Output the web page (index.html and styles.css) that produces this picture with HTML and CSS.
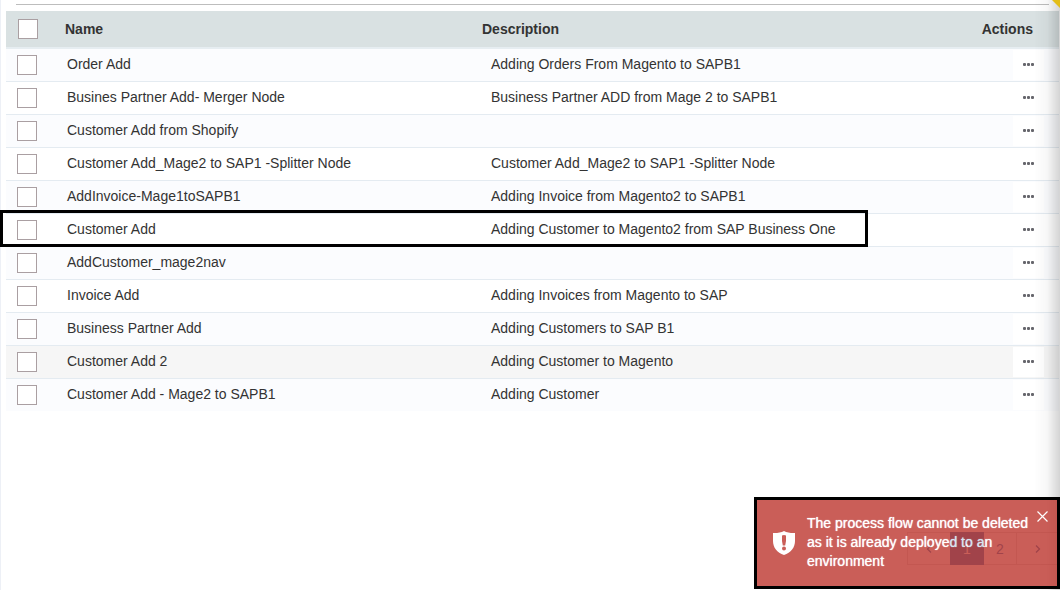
FILE: index.html
```html
<!DOCTYPE html>
<html lang="en">
<head>
<meta charset="utf-8">
<title>Process Flows</title>
<link rel="stylesheet" href="styles.css">
</head>
<body>
<main class="page">
  <hr class="divider">
  <table class="flows">
    <colgroup><col class="col-check"><col class="col-name"><col class="col-desc"><col class="col-actions"></colgroup>
    <thead>
      <tr><th class="check"><input type="checkbox" aria-label="Select all"></th><th>Name</th><th>Description</th><th class="actions">Actions</th></tr>
    </thead>
    <tbody>
      <tr><td class="check"><input type="checkbox" aria-label="Select Order Add"></td><td>Order Add</td><td class="desc">Adding Orders From Magento to SAPB1</td><td class="actions"><button class="more" type="button" aria-label="More actions"><i></i><i></i><i></i></button></td></tr>
      <tr><td class="check"><input type="checkbox" aria-label="Select Busines Partner Add- Merger Node"></td><td>Busines Partner Add- Merger Node</td><td class="desc">Business Partner ADD from Mage 2 to SAPB1</td><td class="actions"><button class="more" type="button" aria-label="More actions"><i></i><i></i><i></i></button></td></tr>
      <tr><td class="check"><input type="checkbox" aria-label="Select Customer Add from Shopify"></td><td>Customer Add from Shopify</td><td class="desc"></td><td class="actions"><button class="more" type="button" aria-label="More actions"><i></i><i></i><i></i></button></td></tr>
      <tr><td class="check"><input type="checkbox" aria-label="Select Customer Add_Mage2 to SAP1 -Splitter Node"></td><td>Customer Add_Mage2 to SAP1 -Splitter Node</td><td class="desc">Customer Add_Mage2 to SAP1 -Splitter Node</td><td class="actions"><button class="more" type="button" aria-label="More actions"><i></i><i></i><i></i></button></td></tr>
      <tr><td class="check"><input type="checkbox" aria-label="Select AddInvoice-Mage1toSAPB1"></td><td>AddInvoice-Mage1toSAPB1</td><td class="desc">Adding Invoice from Magento2 to SAPB1</td><td class="actions"><button class="more" type="button" aria-label="More actions"><i></i><i></i><i></i></button></td></tr>
      <tr class="marked"><td class="check"><input type="checkbox" aria-label="Select Customer Add"></td><td>Customer Add</td><td class="desc">Adding Customer to Magento2 from SAP Business One</td><td class="actions"><button class="more" type="button" aria-label="More actions"><i></i><i></i><i></i></button></td></tr>
      <tr><td class="check"><input type="checkbox" aria-label="Select AddCustomer_mage2nav"></td><td>AddCustomer_mage2nav</td><td class="desc"></td><td class="actions"><button class="more" type="button" aria-label="More actions"><i></i><i></i><i></i></button></td></tr>
      <tr><td class="check"><input type="checkbox" aria-label="Select Invoice Add"></td><td>Invoice Add</td><td class="desc">Adding Invoices from Magento to SAP</td><td class="actions"><button class="more" type="button" aria-label="More actions"><i></i><i></i><i></i></button></td></tr>
      <tr><td class="check"><input type="checkbox" aria-label="Select Business Partner Add"></td><td>Business Partner Add</td><td class="desc">Adding Customers to SAP B1</td><td class="actions"><button class="more" type="button" aria-label="More actions"><i></i><i></i><i></i></button></td></tr>
      <tr class="hovered"><td class="check"><input type="checkbox" aria-label="Select Customer Add 2"></td><td>Customer Add 2</td><td class="desc">Adding Customer to Magento</td><td class="actions"><button class="more" type="button" aria-label="More actions"><i></i><i></i><i></i></button></td></tr>
      <tr><td class="check"><input type="checkbox" aria-label="Select Customer Add - Mage2 to SAPB1"></td><td>Customer Add - Mage2 to SAPB1</td><td class="desc">Adding Customer</td><td class="actions"><button class="more" type="button" aria-label="More actions"><i></i><i></i><i></i></button></td></tr>
    </tbody>
  </table>
  <nav class="pager" aria-label="Pages">
    <a class="arrow" href="#" aria-label="Previous page"><svg width="6" height="8" viewBox="0 0 6 8"><path d="M5 .5 1.5 4 5 7.500"/></svg></a>
    <a class="current" href="#">1</a>
    <a href="#">2</a>
    <a class="arrow" href="#" aria-label="Next page"><svg width="6" height="8" viewBox="0 0 6 8"><path d="M1 .5 4.500 4 1 7.500"/></svg></a>
  </nav>
</main>
<div class="edge-shadow"></div>
<svg class="corner" width="8" height="8" viewBox="0 0 8 8"><path d="M0 0H8V8Z" fill="#e3bd16"/></svg>
<aside class="toast-frame">
  <div class="toast" role="alert">
    <svg class="shield" width="22" height="24" viewBox="0 0 22 24"><path fill="#fff" fill-rule="evenodd" d="M11 0C8 1.600 4 2.200 0 2V10C0 16.500 4 21.500 11 24 18 21.500 22 16.500 22 10V2C18 2.200 14 1.600 11 0ZM9 4.500Q11 3.500 13 4.500V10L12.200 14.500H9.800L9 10ZM11 15.600a2 2 0 1 1 0 4 2 2 0 0 1 0-4Z"/></svg>
    <p class="message">The process flow cannot be deleted as it is already deployed to an environment</p>
    <button class="close" type="button" aria-label="Close"><svg width="11" height="11" viewBox="0 0 11 11"><path d="M.5.500l10 10M10.500.500l-10 10"/></svg></button>
  </div>
</aside>
</body>
</html>
```
FILE: styles.css
```css
* { box-sizing: border-box; }
body {
  margin: 0;
  background: #fff;
  color: #333;
  font: 14px/20px "Liberation Sans", Arial, sans-serif;
}
.page {
  display: flex;
  flex-direction: column;
  min-height: 100vh;
  padding: 4px 1px 25px 5px;
  border-left: 1px solid #edf0f6;
}
.divider {
  width: auto;
  height: 1px;
  margin: 0 10px 6px;
  border: 0;
  background: #bdbdbd;
}
.flows {
  width: 100%;
  table-layout: fixed;
  border-collapse: separate;
  border-spacing: 0;
}
.col-check { width: 52px; }
.col-name { width: 39.6%; }
.col-actions { width: 120px; }
th {
  height: 38px;
  padding: 0 7px;
  background: #d9e1e2;
  border-bottom: 2px solid #e6edf1;
  text-align: left;
}
td {
  height: 33px;
  padding: 0 9px 2px;
  border-bottom: 1px solid #e4ebf1;
}
td.desc { padding-left: 16px; }
tbody tr:nth-child(odd) { background: #fbfcfe; }
tbody tr.hovered { background: #f6f6f6; }
tbody tr:last-child td { height: 32px; border-bottom: 0; }
th.check { padding: 0 0 0 12px; }
td.check { padding: 0 0 0 11px; }
.check input {
  display: block;
  appearance: none;
  width: 20px;
  height: 20px;
  margin: 0;
  border: 1px solid #aa9fa2;
  background: #fff;
}
th.actions { padding-right: 26px; text-align: right; }
td.actions { padding: 0 15px 0 0; }
.more {
  display: flex;
  align-items: center;
  justify-content: center;
  gap: 1px;
  width: 31px;
  height: 30px;
  margin-left: auto;
  padding: 0 1px 1px 0;
  border: 0;
  background: #fff;
}
.more i { width: 3px; height: 3px; border-radius: 1px; background: #66666c; }
.marked { position: relative; }
.marked .check::after {
  content: "";
  position: absolute;
  inset: -4px 191px 0 -6px;
  border: 3px solid #000;
  pointer-events: none;
}
.pager {
  display: flex;
  align-self: flex-end;
  margin-top: auto;
  height: 33px;
  border: 1px solid #ddd;
  border-right: 0;
}
.pager a {
  display: flex;
  align-items: center;
  justify-content: center;
  width: 33px;
  border-right: 1px solid #ddd;
  color: #337ab7;
  text-decoration: none;
}
.pager .arrow { width: 42px; border-right: 0; }
.pager .current {
  margin: -1px 0;
  width: 34px;
  border: 0;
  background: #337ab7;
  color: #fff;
}
.pager path { fill: none; stroke: #337ab7; stroke-width: 1.300; }
.edge-shadow {
  position: fixed;
  inset: 0 0 0 auto;
  width: 26px;
  background: linear-gradient(to right, rgba(0,0,0,0), rgba(0,0,0,.03) 50%, rgba(0,0,0,.17));
  pointer-events: none;
}
.corner { position: fixed; top: 0; right: 0; }
.toast-frame {
  position: fixed;
  right: 0;
  bottom: 1px;
  width: 306px;
  border: 3px solid #000;
}
.toast {
  display: flex;
  align-items: center;
  gap: 12px;
  padding: 11px 9px 12px 16px;
  background: #bd362f;
  color: #fff;
  opacity: .8;
}
.shield { flex: none; }
.message {
  flex: 1;
  margin: 3px 0;
  line-height: 19px;
  text-shadow: 0 0 1px #fff;
}
.close {
  align-self: flex-start;
  display: flex;
  margin-left: -12px;
  padding: 0;
  border: 0;
  background: none;
}
.close path { fill: none; stroke: #fff; stroke-width: 1.200; }
```
